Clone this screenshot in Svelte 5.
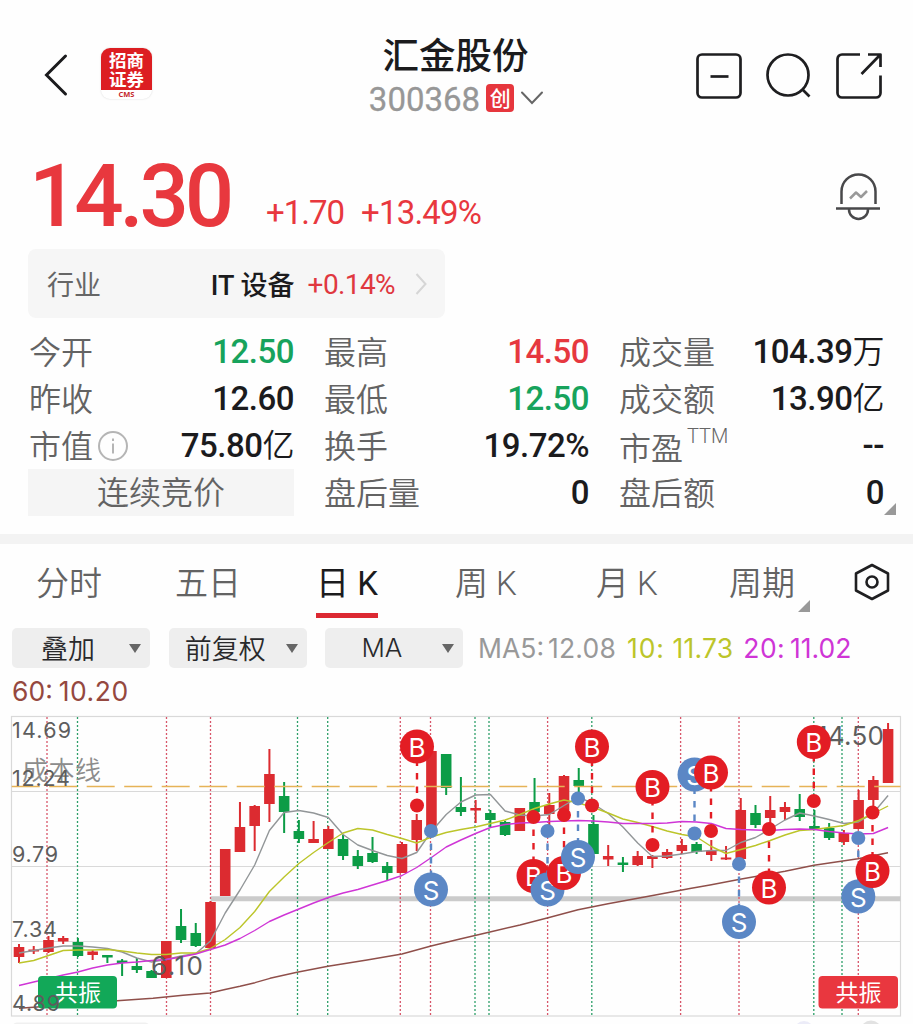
<script>
  const stats = [
    { label: '今开', value: '12.50', tone: 'down' },
    { label: '最高', value: '14.50', tone: 'up' },
    { label: '成交量', value: '104.39', unit: '万' },
    { label: '昨收', value: '12.60' },
    { label: '最低', value: '12.50', tone: 'down' },
    { label: '成交额', value: '13.90', unit: '亿' },
    { label: '市值', value: '75.80', unit: '亿', info: true },
    { label: '换手', value: '19.72%' },
    { label: '市盈', value: '--', sup: 'TTM' },
    { phase: '连续竞价' },
    { label: '盘后量', value: '0' },
    { label: '盘后额', value: '0', more: true }
  ];
  const tabs = ['分时', '五日', '日 K', '周 K', '月 K', '周期'];
  const selects = ['叠加', '前复权', 'MA'];

  const step = 14.73;
  const cx = (i) => 19 + i * step;

  // direction, high, body top, body bottom, low
  const candles = [
    ['r', 944, 947, 957, 963], ['r', 946, 949.5, 951.5, 954], ['r', 936, 940, 952, 953],
    ['r', 936, 938, 941.5, 944], ['g', 938, 942, 956, 957], ['r', 950, 951.5, 955, 960],
    ['g', 955, 955, 957.5, 963], ['g', 959, 960.5, 963, 976], ['g', 958, 966, 970, 973],
    ['g', 970, 971, 978, 978], ['r', 941, 941, 978, 978], ['g', 909, 926, 940, 943],
    ['g', 923, 933, 946, 947], ['r', 901, 902, 948, 949], ['r', 849, 849, 896, 896],
    ['r', 802, 827, 852, 852], ['r', 805, 806, 826, 851], ['r', 749, 774, 804, 822],
    ['g', 782, 796, 812, 833], ['g', 820, 831, 839, 843], ['r', 821, 839, 843, 843],
    ['r', 826, 829, 849, 849], ['g', 835, 839, 856, 860], ['g', 850, 856, 866, 869],
    ['g', 837, 853, 862, 863], ['g', 862, 866, 873, 880], ['r', 842, 844, 873, 873],
    ['r', 814, 820, 840, 851], ['r', 751, 751, 830, 830], ['g', 754, 754, 788, 795],
    ['g', 777, 807, 812, 816], ['r', 800, 808, 810.5, 823], ['g', 810, 813, 820, 827],
    ['g', 821, 822, 835, 836], ['r', 808, 808, 831, 831], ['g', 778, 802, 812, 817],
    ['r', 793, 805, 814, 825], ['r', 775, 776, 810, 815], ['g', 768, 780, 786, 793],
    ['g', 815, 824, 854, 854], ['r', 845, 856, 859.5, 866], ['g', 857, 862.5, 865, 872],
    ['r', 851, 856, 865, 866], ['r', 855, 856, 859, 868], ['r', 849, 852, 858, 859],
    ['r', 839, 845, 851, 854], ['g', 842, 844, 852, 854], ['r', 840, 851, 855, 861],
    ['r', 846, 857.5, 859.5, 860], ['r', 798, 810, 859, 860], ['g', 805, 813, 825, 828],
    ['r', 796, 810, 818, 823], ['r', 802, 807, 812, 820], ['g', 794, 809, 817, 821],
    ['g', 810, 826, 829, 829], ['g', 823, 828, 838, 840], ['r', 830, 833, 842, 845],
    ['r', 790, 800, 829, 829], ['r', 776, 780, 800, 812], ['r', 723, 729, 783, 783]
  ];

  const ma5 = [953, 950.5, 948, 946, 946, 947, 948.5, 952, 958, 962, 959.5, 956, 953.5, 941, 913, 890, 865, 830.5, 812.5, 810.5, 813, 817.5, 834.5, 845, 850.5, 855.5, 858.5, 852.5, 831.5, 814.5, 802, 795, 794.5, 811, 815, 816, 814.5, 805.5, 797, 804, 813.5, 827, 843, 856.5, 856, 854, 851.5, 850.5, 850.5, 842.5, 837.5, 829, 820, 813, 816, 819.5, 823.5, 822, 813, 795.5];
  const ma10 = [963, 960.5, 955.5, 950.5, 950, 950, 949.5, 951, 953, 954.5, 954.5, 953, 953, 948.5, 939.5, 927.5, 911.5, 891.5, 877, 863.5, 852.5, 842.5, 833, 828.5, 830, 834.5, 838.5, 843, 837, 832.5, 829.5, 827, 823.5, 820, 814.5, 808.5, 804, 800, 803, 807.5, 813, 819, 822.5, 826.5, 831, 834.5, 837, 846.5, 853.5, 849.5, 845.5, 840.5, 835, 830.5, 829.5, 827.5, 825.5, 820.5, 813.5, 806];
  const ma20 = [985.5, 982, 978.5, 975, 972, 968, 965, 963, 962, 960.5, 959.5, 957, 954, 949.5, 945, 938.5, 930.5, 921.5, 915, 909, 903, 897.5, 893, 889.5, 885, 880.5, 875.5, 867.5, 857.5, 847, 840, 833.5, 827.5, 824.5, 823, 822.5, 821.5, 821, 820.5, 821, 822, 823.5, 823.5, 823.5, 823, 821.5, 822, 823.5, 828.5, 829.5, 830, 830.5, 829.5, 829, 829.5, 831.5, 833, 834, 833.5, 827.5];
  const ma60 = '19,1008.3 37,1007 117,1000.7 153,998.3 183,995.3 210,993 225,989.5 240,986.3 255,982.7 270,978.3 297,972.3 328,966.3 367,960 402,954 431,946 460,939 491,931.7 520,925 550,917.3 578,909.7 608,903.7 650,896 690,888.5 710,885 740,879.3 785,871.3 814,865.3 858,858.7 888,852.7';
  const line = (ys) => ys.map((y, i) => `${cx(i).toFixed(1)},${y}`).join(' ');

  const redDays = [47, 166.5, 210.5, 400.3, 430.5, 547.6, 680.6, 739, 858.3];
  const greenDays = [77.5, 297.5, 327.7, 475, 489, 591.8, 813.8, 842];
  const gridYs = [791.5, 866.5, 941.5];
  const axis = [
    ['14.69', 738, 59], ['12.24', 786, 58], ['9.79', 861.5, 46], ['7.34', 936.5, 45], ['4.89', 1010.5, 48]
  ];

  // side, x, badge y, anchor y
  const signals = [
    ['B', 417, 746.5, 805.5], ['S', 431, 889.5, 831], ['B', 533.5, 876, 817],
    ['S', 547.5, 889.5, 831], ['B', 564, 873, 815], ['S', 578, 857, 798.5],
    ['B', 592, 746.5, 805.5], ['B', 652.5, 787, 845], ['S', 694.5, 774.5, 833.5],
    ['B', 711, 772.5, 831], ['S', 739, 922, 864], ['B', 769, 887.5, 829],
    ['B', 813.8, 742, 801], ['S', 858.3, 896.5, 838], ['B', 872.5, 871, 812.5]
  ];
  const hue = { B: '#e31d24', S: '#5b87c5', r: '#dc2b30', g: '#0c9c46' };
</script>

<main>
  <header>
    <div class="left">
      <svg class="back" width="24" height="44" viewBox="0 0 24 44"><path d="M21.5 3 2.5 22l19 19" /></svg>
      <div class="logo">
        <div class="logo-red"><span>招商</span><span>证券</span></div>
        <div class="logo-foot">CMS</div>
      </div>
    </div>
    <div class="title">
      <h1>汇金股份</h1>
      <div class="code">
        <span class="num">300368</span><b>创</b>
        <svg width="24" height="16" viewBox="0 0 24 16"><path d="M2 2.5 12 13 22 2.5" /></svg>
      </div>
    </div>
    <div class="actions">
      <svg width="46" height="46" viewBox="0 0 46 46"><rect x="1.5" y="1.5" width="43" height="43" rx="4.5" /><path d="M14.5 23.5h18" /></svg>
      <svg width="46" height="46" viewBox="0 0 46 46"><circle cx="22" cy="22" r="20.5" /><path d="m36 36 7.5 7.5" /></svg>
      <svg width="46" height="46" viewBox="0 0 46 46"><path d="M24 1.5H6A4.5 4.5 0 0 0 1.500 6v34A4.500 4.500 0 0 0 6 44.500h34a4.500 4.500 0 0 0 4.500-4.500V22.500M32 1.500h12.500V14M43.500 2.500 25.500 21" /></svg>
    </div>
  </header>

  <section class="quote">
    <span class="price">14.30</span>
    <span class="delta">+1.70</span>
    <span class="delta pct">+13.49%</span>
    <svg class="bell" width="48" height="50" viewBox="0 0 48 50">
      <path d="M7.500 32V19.500a17 17 0 0 1 34 0V32M2 36.500h44M15 37.500a9.500 9.500 0 0 0 19 0" />
      <path class="spark" d="m16 26.500 6-6 5 4.500 6-6" />
    </svg>
  </section>

  <section class="industry">
    <span class="ind-label">行业</span>
    <span class="ind-name">IT 设备</span>
    <span class="ind-pct">+0.14%</span>
    <svg width="12" height="24" viewBox="0 0 12 24"><path d="m1.500 2 9 10-9 10" /></svg>
  </section>

  <section class="stats">
    {#each stats as s}
      {#if s.phase}
        <div class="phase">{s.phase}</div>
      {:else}
        <div class="stat">
          <span class="label" class:low={s.sup}>{s.label}</span>
          {#if s.sup}<sup>{s.sup}</sup>{/if}
          {#if s.info}
            <svg class="info" width="32" height="32" viewBox="0 0 32 32"><circle cx="16" cy="16" r="14" /><path d="M16 13.500v10M16 8.500v2.500" /></svg>
          {/if}
          <span class="value {s.tone ?? ''}">{s.value}{#if s.unit}<i>{s.unit}</i>{/if}</span>
          {#if s.more}<span class="corner"></span>{/if}
        </div>
      {/if}
    {/each}
  </section>

  <div class="divider"></div>

  <nav>
    {#each tabs as t, i}
      <span class="tab" class:active={i === 2}>{t}{#if i === 5}<span class="corner"></span>{/if}</span>
    {/each}
    <svg width="36" height="38" viewBox="0 0 36 38"><path d="M18 2 34 10.500v17L18 36 2 27.500v-17z" /><circle cx="18" cy="19" r="5.500" /></svg>
  </nav>

  <section class="tools">
    {#each selects as s, i}
      <button class:wide={i === 1} class:latin={i === 2}><span>{s}</span><svg width="12" height="9" viewBox="0 0 12 9"><path d="M0 0h12L6 9z" /></svg></button>
    {/each}
    <span class="ma m5">MA5:<em>12.08</em></span>
    <span class="ma m10">10:<em>11.73</em></span>
    <span class="ma m20">20:<em>11.02</em></span>
  </section>
  <div class="ma m60">60:<em>10.20</em></div>

  <svg class="chart" width="913" height="314" viewBox="0 710 913 314">
    <g fill="none" stroke="#d9d9d9" stroke-width="1.2">
      <rect x="11.500" y="716.500" width="889" height="299.500" />
      {#each gridYs as y}<path d="M11.500 {y}H900.500" />{/each}
    </g>
    <path d="M210.500 898.800H900.500" stroke="#cbcbcb" stroke-width="5" />
    <g stroke-width="1.300" stroke-dasharray="2 2">
      {#each redDays as x}<path d="M{x} 717V1015" stroke="#d8566a" />{/each}
      {#each greenDays as x}<path d="M{x} 717V1015" stroke="#2d9f69" />{/each}
    </g>
    {#each candles as [dir, high, top, bottom, low], i}
      <g fill={hue[dir]}>
        <rect x={cx(i) - 1} y={high} width="2" height={low - high} />
        <rect x={cx(i) - 5.300} y={top} width="10.600" height={bottom - top} />
      </g>
    {/each}
    <path d="M11.700 786.500H900.500" stroke="#e6b357" stroke-width="1.600" stroke-dasharray="28 9.500" />
    <g fill="none" stroke-width="1.400" stroke-linejoin="round">
      <polyline points={line(ma5)} stroke="#929698" />
      <polyline points={line(ma10)} stroke="#bcc52a" />
      <polyline points={line(ma20)} stroke="#cf35d6" />
      <polyline points={ma60} stroke="#8f4f4a" />
    </g>
    <text class="cost" x="22" y="780" textLength="79">成本线</text>
    <text class="peak" x="151" y="974.500" textLength="52">6.10</text>
    <text class="peak" x="817" y="745" textLength="67">14.50</text>

    {#each signals as [side, x, y, anchor]}
      <path d="M{x} {anchor}V{y}" stroke={hue[side]} stroke-width="2.400" stroke-dasharray="6.500 7" stroke-dashoffset="1" />
      <circle cx={x} cy={anchor} r="7" fill={hue[side]} />
      <circle cx={x} cy={y} r="17" fill={hue[side]} />
      <text class="side" {x} y={y + 10}>{side}</text>
    {/each}

    <rect x="38" y="976" width="79" height="32.500" rx="4" fill="#12a858" />
    <text class="tag" x="55" y="1001" textLength="46">共振</text>
    <rect x="818.500" y="976" width="79.500" height="32.500" rx="4" fill="#e9373f" />
    <text class="tag" x="835.500" y="1001" textLength="46">共振</text>
    {#each axis as [label, y, w]}<text class="axis" x="12" {y} textLength={w}>{label}</text>{/each}

    <rect x="13" y="1022.500" width="136" height="8" rx="4" fill="#f0f0f0" />
    <circle cx="804" cy="1031" r="10" fill="#ececf8" />
    <circle cx="871" cy="1031" r="10.500" fill="#e2e2e2" />
  </svg>
</main>

<style>
  :global(body) { background: #fefefe; overflow: hidden; }
  main {
    width: 913px; height: 1024px; overflow: hidden; background: #fefefe; color: #1b1b1d;
    font-family: Roboto, "Noto Sans CJK SC", sans-serif;
  }
  svg { display: block; flex: none; }
  path, polyline { stroke-linecap: butt; }

  header { display: grid; grid-template-columns: 1fr auto 1fr; height: 124px; }
  .left { display: flex; align-items: center; height: 150px; padding-left: 44px; }
  .back path { fill: none; stroke: #1b1b1d; stroke-width: 3; stroke-linecap: round; }
  .logo { width: 51px; height: 51px; margin: -4px 0 0 33px; border-radius: 9px; overflow: hidden; background: #fff; box-shadow: 0 0 2px #d8d8d8; }
  .logo-red { display: flex; flex-direction: column; align-items: center; height: 42px; background: #dc1e22; color: #fff; font: 700 17.500px/19px "Noto Sans CJK SC", sans-serif; padding-top: 2px; box-sizing: border-box; }
  .logo-foot { font: 700 7.500px/8px "Open Sans", sans-serif; text-align: center; color: #c5262b; }
  .title { display: flex; flex-direction: column; align-items: center; gap: 5px; padding-top: 33px; }
  h1 { margin: 0 2px 0 0; font: 450 36.500px/42px "Noto Sans CJK SC", sans-serif; }
  .code { display: flex; align-items: center; height: 36px; color: #979797; }
  .num { font-size: 33px; font-weight: 400; line-height: 34px; padding-top: 3px; -webkit-text-stroke: .3px; }
  .code b { width: 28px; height: 28px; margin: 0 6px; border-radius: 4px; background: #e6363d; color: #fff; font: 500 21px/27px "Noto Sans CJK SC", sans-serif; text-align: center; }
  .code path { fill: none; stroke: #666; stroke-width: 2; stroke-linecap: round; }
  .actions { display: flex; align-items: center; justify-content: flex-end; gap: 24px; height: 151px; padding-right: 31.500px; }
  .actions svg { fill: none; stroke: #1e1e20; stroke-width: 2.700; stroke-linecap: round; stroke-linejoin: round; }

  .quote { display: flex; align-items: baseline; height: 125px; color: #e8383e; }
  .price { margin-left: 29px; font-size: 87px; line-height: 145px; font-weight: 500; letter-spacing: -4.200px; }
  .delta { position: relative; top: -2px; margin-left: 36px; font-size: 33px; font-weight: 450; letter-spacing: -1px; }
  .pct { margin-left: 17px; letter-spacing: -.8px; }
  .bell { align-self: flex-start; margin: 48px 31px 0 auto; fill: none; stroke: #48484a; stroke-width: 2.500; stroke-linecap: round; }
  .bell .spark { stroke: #999; stroke-linejoin: round; }

  .industry { display: flex; align-items: center; box-sizing: border-box; width: 417px; height: 69px; margin-left: 28px; padding: 0 18px 0 19px; border-radius: 8px; background: #f6f6f6; font-size: 27px; }
  .ind-label { color: #666; margin-right: auto; }
  .ind-name { font-weight: 500; }
  .ind-pct { margin: 2px 20px 0 13px; color: #e0383f; font-weight: 450; font-size: 28px; letter-spacing: -.6px; }
  .industry path { fill: none; stroke: #d6d6d6; stroke-width: 2; }

  .stats { display: grid; grid-template-columns: repeat(3, 265px); grid-auto-rows: 47px; column-gap: 30px; padding: 10px 0 0 29px; height: 206px; }
  .stat { display: flex; align-items: center; position: relative; }
  .label { font: 350 32px/44px "Noto Sans CJK SC", sans-serif; color: #636363; margin-bottom: 4px; }
  .low { padding-top: 5px; }
  sup { align-self: flex-start; margin: 3px 0 0 4px; font: 300 20px/23px Roboto, sans-serif; color: #666; }
  .info { margin-left: 4px; fill: none; stroke: #b5b5b5; stroke-width: 2; }
  .value { margin-left: auto; font-size: 33px; font-weight: 500; white-space: nowrap; line-height: 47px; letter-spacing: -.5px; }
  .value i { font: 350 32px/40px "Noto Sans CJK SC", sans-serif; }
  .up { color: #e6383f; }
  .down { color: #17a35c; }
  .phase { margin: 0 0 0 -1px; background: #f5f5f5; color: #636363; text-align: center; font: 350 32px/43px "Noto Sans CJK SC", sans-serif; }
  .corner { position: absolute; width: 12px; height: 12px; background: #999; clip-path: polygon(100% 0, 100% 100%, 0 100%); right: -12px; bottom: 1px; }
  .divider { height: 10px; background: #f3f3f3; }

  nav { display: grid; grid-template-columns: 139px 144px 136px 141px 133px 125px 36px; height: 84px; padding-left: 36px; box-sizing: border-box; }
  .tab { position: relative; justify-self: start; height: 74px; font: 350 33px/79px Roboto, "Noto Sans CJK SC", sans-serif; color: #636363; box-sizing: border-box; white-space: pre; }
  .active { width: 62px; color: #1b1b1d; font-weight: 400; box-shadow: inset 0 -5px #dc2932; margin-left: -3px; }
  .tab .corner { bottom: 6px; right: -15px; }
  nav svg { margin-top: 19px; fill: none; stroke: #1f1f21; stroke-width: 2.600; stroke-linejoin: round; }

  .tools { display: flex; align-items: center; height: 40px; padding-left: 12px; }
  button { display: flex; align-items: center; box-sizing: border-box; flex: none; width: 138px; height: 40px; margin: 0 18.700px 0 0; padding: 0 9px 0 29px; border: 0; border-radius: 5px; background: #eee; color: #29292b; font: 350 27px/40px "Noto Sans CJK SC", sans-serif; }
  button.wide { padding-left: 16px; }
  button.latin { padding-left: 36px; font-family: Inter, sans-serif; font-size: 26px; }
  button svg { margin-left: auto; fill: #666; }
  .ma { font: 400 26.500px/42px Inter, sans-serif; white-space: nowrap; }
  .ma em { font-style: normal; margin-left: 4px; letter-spacing: .2px; }
  .m5 { color: #999; margin-left: -4px; }
  .m10 { color: #bcc52a; margin-left: 11px; letter-spacing: .8px; }
  .m10 em { margin-left: 8px; }
  .m20 { color: #cf35d6; margin-left: 10px; letter-spacing: .4px; }
  .m20 em { margin-left: 5px; letter-spacing: 0; }
  .m60 { color: #95483f; height: 42px; line-height: 47px; margin-left: 12px; }
  .m60 em { margin-left: 6px; letter-spacing: .5px; }

  .axis, .peak { font-family: Inter, sans-serif; fill: #5d5d5d; }
  .axis { font-size: 21.500px; }
  .peak { font-size: 26px; }
  .cost { font: 350 26px "Noto Sans CJK SC", sans-serif; fill: #8c8c8c; }
  .side { font: 400 26px Inter, sans-serif; fill: #fff; text-anchor: middle; }
  .tag { font: 400 23px "Noto Sans CJK SC", sans-serif; fill: #fff; }
</style>
